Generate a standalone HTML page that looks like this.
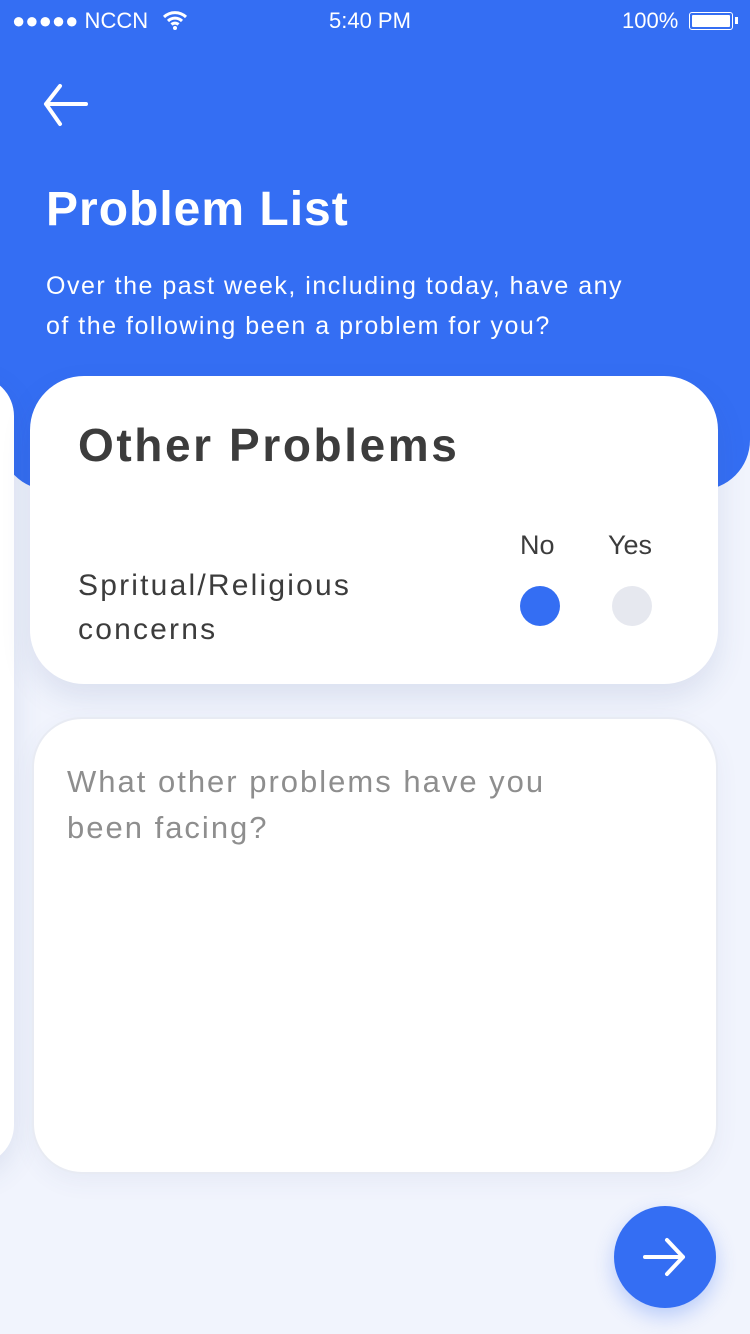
<!DOCTYPE html>
<html><head><style>
body{margin:0;width:750px;height:1334px;background:#f1f4fd;font-family:"Liberation Sans",sans-serif;position:relative;overflow:hidden}
.hdr{position:absolute;left:0;top:0;width:750px;height:490px;background:#346ef3;border-radius:0 0 50px 50px}
.sb{position:absolute;top:8px;color:#fff;font-size:22px}
.left{position:absolute;left:-60px;top:376px;width:74px;height:789px;background:#fff;border-radius:0 40px 40px 0;box-shadow:0 10px 30px rgba(60,80,140,.12)}
.card{position:absolute;left:30px;top:376px;width:688px;height:308px;background:#fff;border-radius:54px;box-shadow:0 14px 30px rgba(60,80,140,.12)}
.ta{position:absolute;left:32px;top:717px;width:682px;height:453px;background:#fff;border-radius:50px;border:2px solid #e8ebf3;box-shadow:0 8px 24px rgba(60,80,140,.06)}
.fab{position:absolute;left:614px;top:1206px;width:102px;height:102px;border-radius:50%;background:#346ef3;box-shadow:0 8px 20px rgba(52,110,243,.3)}
</style></head><body>
<div class="hdr"></div>
<div class="sb" style="left:12px">●●●●● NCCN
<svg width="26" height="20" viewBox="0 0 26 20" style="vertical-align:-2px;margin-left:8px"><path d="M2 7a16 16 0 0 1 22 0M6 11a10 10 0 0 1 14 0M9.5 14.5a5 5 0 0 1 7 0" stroke="#fff" stroke-width="3" fill="none"/><circle cx="13" cy="18" r="2" fill="#fff"/></svg></div>
<div class="sb" style="left:329px">5:40 PM</div>
<div class="sb" style="left:622px">100%</div>
<div style="position:absolute;left:689px;top:12px;width:42px;height:16px;border:1.5px solid #fff;border-radius:3px"><div style="margin:2px;height:12px;background:#fff;border-radius:1px"></div></div>
<div style="position:absolute;left:735px;top:17px;width:3px;height:7px;background:#fff"></div>
<svg style="position:absolute;left:42px;top:82px" width="50" height="46" viewBox="0 0 50 46"><path d="M4 22H44M4 22L18 4M4 22L18 42" stroke="#fff" stroke-width="4" stroke-linecap="round" fill="none"/></svg>
<div style="position:absolute;left:46px;top:182px;color:#fff;font-size:48px;font-weight:bold;letter-spacing:1px">Problem List</div>
<div style="position:absolute;left:46px;top:266px;color:#fff;font-size:25px;line-height:40px;letter-spacing:1.5px">Over the past week, including today, have any<br>of the following been a problem for you?</div>
<div class="left"></div>
<div class="card">
<div style="position:absolute;left:48px;top:42px;font-size:46px;font-weight:bold;color:#3c3c3c;letter-spacing:2.6px">Other Problems</div>
<div style="position:absolute;left:48px;top:188px;font-size:30px;line-height:44px;color:#3c3c3c;letter-spacing:2.2px">Spritual/Religious<br>concerns</div>
<div style="position:absolute;left:490px;top:154px;font-size:27px;color:#3c3c3c">No</div>
<div style="position:absolute;left:578px;top:154px;font-size:27px;color:#3c3c3c">Yes</div>
<div style="position:absolute;left:490px;top:210px;width:40px;height:40px;border-radius:50%;background:#346ef3"></div>
<div style="position:absolute;left:582px;top:210px;width:40px;height:40px;border-radius:50%;background:#e6e8ef"></div>
</div>
<div class="ta"><div style="position:absolute;left:33px;top:40px;font-size:31px;line-height:46px;color:#8e8e8e;letter-spacing:2px">What other problems have you<br>been facing?</div></div>
<div class="fab"><svg style="position:absolute;left:27px;top:29px" width="48" height="44" viewBox="0 0 48 44"><path d="M4 22H42M42 22L26 5M42 22L26 39" stroke="#fff" stroke-width="4" stroke-linecap="round" fill="none"/></svg></div>
</body></html>
